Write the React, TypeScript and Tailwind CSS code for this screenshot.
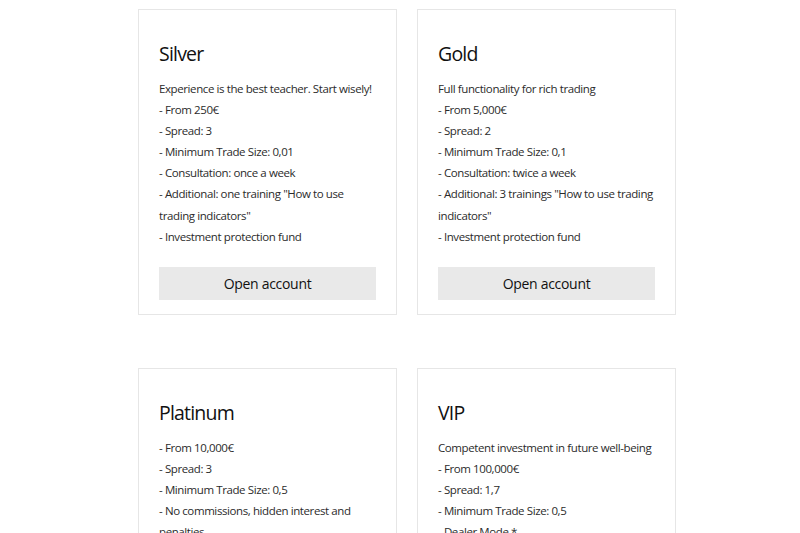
const plans = [
  {
    name: 'Silver',
    intro: 'Experience is the best teacher. Start wisely!',
    items: [
      'From 250€',
      'Spread: 3',
      'Minimum Trade Size: 0,01',
      'Consultation: once a week',
      'Additional: one training "How to use trading indicators"',
      'Investment protection fund',
    ],
  },
  {
    name: 'Gold',
    intro: 'Full functionality for rich trading',
    items: [
      'From 5,000€',
      'Spread: 2',
      'Minimum Trade Size: 0,1',
      'Consultation: twice a week',
      'Additional: 3 trainings "How to use trading indicators"',
      'Investment protection fund',
    ],
  },
  {
    name: 'Platinum',
    intro: '',
    items: [
      'From 10,000€',
      'Spread: 3',
      'Minimum Trade Size: 0,5',
      'No commissions, hidden interest and penalties',
      'Consultation: every day',
      'Personal manager',
      'Investment protection fund',
    ],
  },
  {
    name: 'VIP',
    intro: 'Competent investment in future well-being',
    items: [
      'From 100,000€',
      'Spread: 1,7',
      'Minimum Trade Size: 0,5',
      'Dealer Mode *',
      'Consultation: every day',
      'Personal manager',
      'Investment protection fund',
    ],
  },
];

function PlanCard({ plan }: { plan: (typeof plans)[number] }) {
  return (
    <div className="flex flex-col border border-[#e6e6e6] bg-white px-5 pt-[30px] pb-[14px]">
      <h3 className="text-[19.5px] leading-[28px] tracking-[-0.8px] text-[#111]">{plan.name}</h3>
      <div className="mt-[10px] flex-1 text-[11.5px] leading-[21.1px] tracking-[-0.4px] text-[#2b2b2b]">
        {plan.intro && <p>{plan.intro}</p>}
        {plan.items.map((item) => (
          <p key={item}>- {item}</p>
        ))}
      </div>
      <button
        type="button"
        className="mt-[20px] h-[33px] w-full bg-[#e9e9e9] text-[14px] tracking-[-0.3px] text-[#111]"
      >
        Open account
      </button>
    </div>
  );
}

export default function App() {
  return (
    <main
      className="min-h-screen bg-white pt-[9px] pb-10"
      style={{ fontFamily: '"Open Sans", "Liberation Sans", sans-serif' }}
    >
      <div className="ml-[138px] grid w-[538px] grid-cols-2 gap-x-5 gap-y-[53px]">
        {plans.map((plan) => (
          <PlanCard key={plan.name} plan={plan} />
        ))}
      </div>
    </main>
  );
}
